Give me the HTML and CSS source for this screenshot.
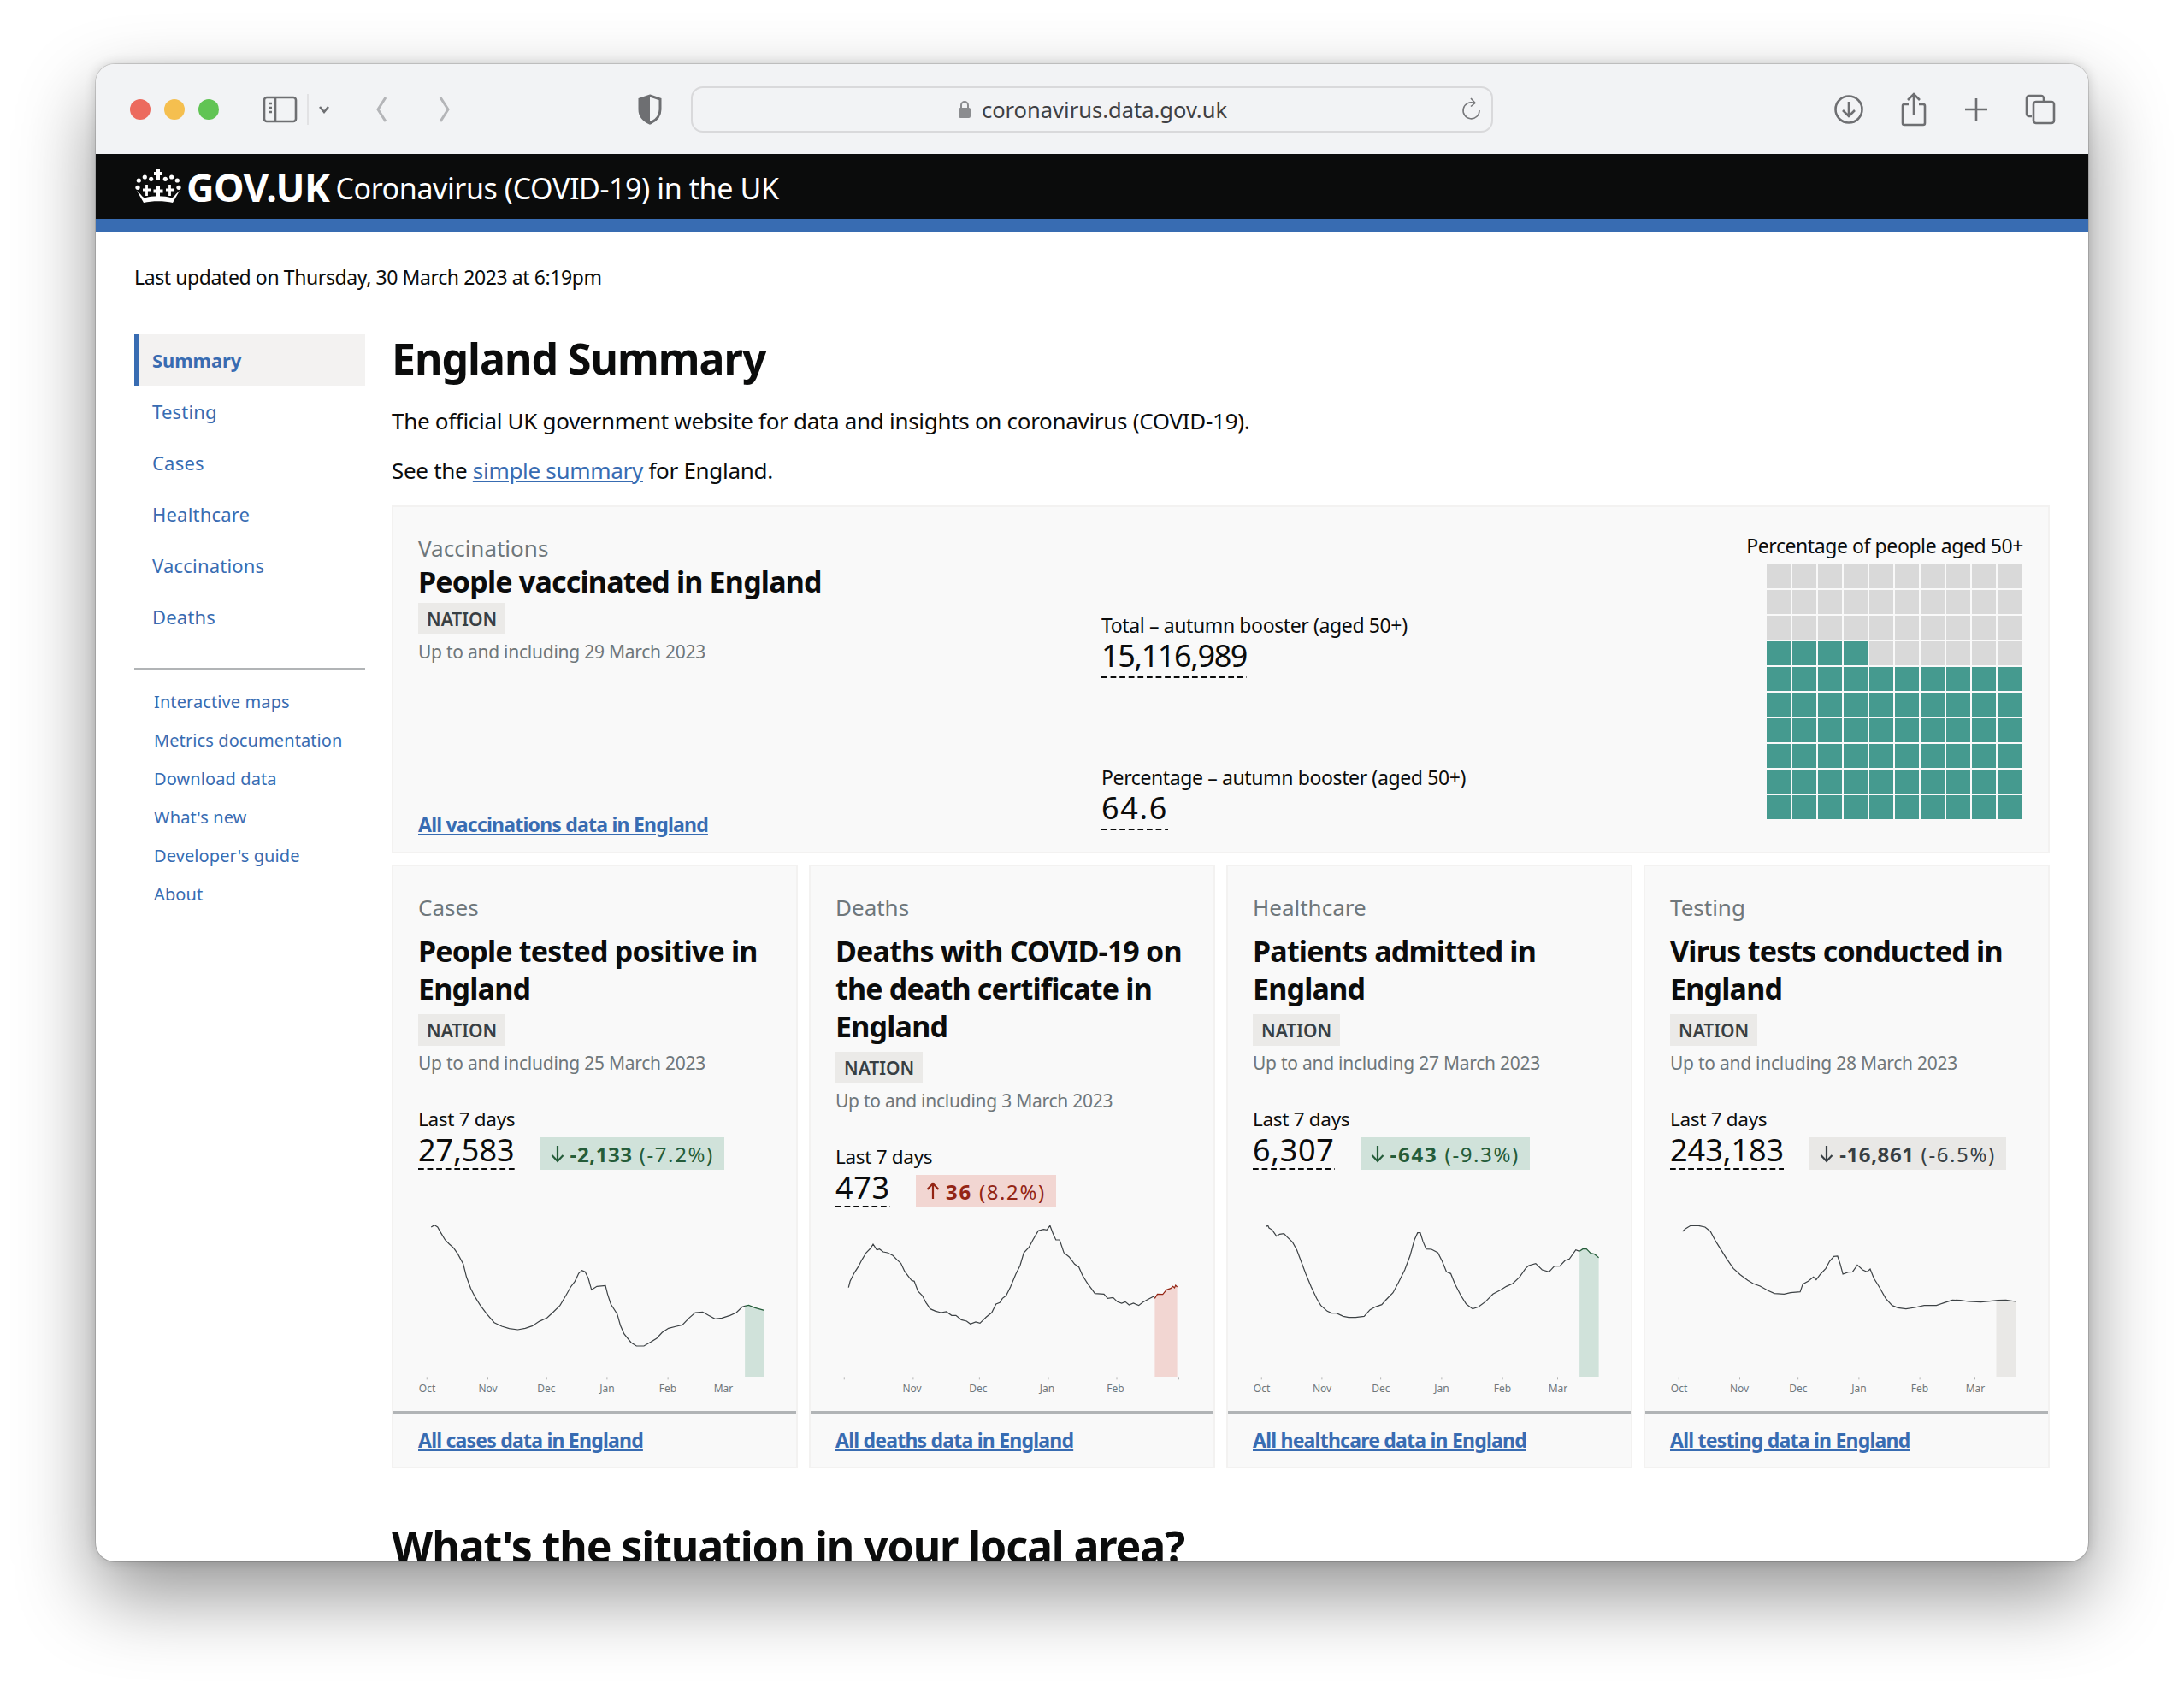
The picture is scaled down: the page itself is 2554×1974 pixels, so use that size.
FILE: index.html
```html
<!DOCTYPE html>
<html lang="en">
<head>
<meta charset="utf-8">
<title>England Summary</title>
<link rel="stylesheet" href="styles.css">
</head>
<body>
<div class="window">
  <div class="chrome">
    <div class="lights"><span class="light red"></span><span class="light amber"></span><span class="light green"></span></div>
    <svg class="ic side" width="100" height="40" viewBox="0 0 100 40"><rect x="4" y="6" width="37" height="28" rx="3" class="st"/><path d="M17 6v28M9 13h4M9 18h4M9 23h4" class="st"/><path d="M55 2v36" stroke="#dcdcde" stroke-width="1.500" fill="none"/><path d="M69 17l5 6 5-6" class="st"/></svg>
    <svg class="ic nav" width="100" height="32" viewBox="0 0 100 32"><path d="M14 2L5 16l9 14M78 2l9 14-9 14" fill="none" stroke="#b4b5b8" stroke-width="3"/></svg>
    <svg class="ic shield" width="30" height="36" viewBox="0 0 30 36"><path d="M15 2l12 4v12c0 8-5 13-12 16C8 31 3 26 3 18V6z" fill="none" stroke="#6e6f72" stroke-width="3"/><path d="M15 2L3 6v12c0 8 5 13 12 16z" fill="#6e6f72"/></svg>
    <div class="address">
      <svg class="lock" width="18" height="22" viewBox="0 0 18 22"><path d="M5 10V6a4 4 0 018 0v4" fill="none" stroke="#8b8c8f" stroke-width="2"/><rect x="2" y="9" width="14" height="12" rx="2" fill="#8b8c8f"/></svg>
      <span class="url">coronavirus.data.gov.uk</span>
      <svg class="reload" width="24" height="28" viewBox="0 0 24 28"><path d="M15 6.500A9.500 9.500 0 1 0 21 15" fill="none" stroke="#77787b" stroke-width="1.600"/><path d="M11 1l5 5.500-5 4" fill="none" stroke="#77787b" stroke-width="1.600"/></svg>
    </div>
    <div class="tools">
      <svg width="36" height="36" viewBox="0 0 36 36"><circle cx="18" cy="18" r="15.500" class="st"/><path d="M18 9v17M11 19l7 7 7-7" class="st"/></svg>
      <svg width="32" height="40" viewBox="0 0 32 40"><path d="M10 14H5a2 2 0 00-2 2v20a2 2 0 002 2h22a2 2 0 002-2V16a2 2 0 00-2-2h-5M16 27V2M9 9l7-7 7 7" class="st"/></svg>
      <svg width="30" height="30" viewBox="0 0 30 30"><path d="M15 2v26M2 15h26" class="st"/></svg>
      <svg width="36" height="36" viewBox="0 0 36 36"><path d="M8 26H5a3 3 0 01-3-3V5a3 3 0 013-3h14a3 3 0 013 3v3" class="st"/><rect x="10" y="9" width="24" height="25" rx="3" class="st"/></svg>
    </div>
  </div>
  <header class="gov">
    <svg class="crown" width="54" height="40" viewBox="0 0 54 40"><g fill="#fff"><circle cx="4.300" cy="13" r="2.600"/><circle cx="11.300" cy="9" r="2.600"/><circle cx="18.700" cy="11.300" r="2.600"/><circle cx="35.300" cy="11.300" r="2.600"/><circle cx="42.700" cy="9" r="2.600"/><circle cx="49.300" cy="13" r="2.600"/><circle cx="3" cy="21.300" r="2.600"/><circle cx="51" cy="21.300" r="2.600"/><path d="M2 25C6 28 8 32 11 33.500 20 30.500 34 30.500 43 33.500 46 32 48 28 52 25L44 39C34 36.500 20 36.500 10 39Z"/></g><path d="M27 0v13M22 5h10M27 20v12M21.500 25.500h11" fill="none" stroke="#fff" stroke-width="4"/><path d="M13.500 18v13M9 24h9M40.500 18v13M36 24h9" fill="none" stroke="#fff" stroke-width="2.800"/></svg>
    <span class="gov-logo">GOV.UK</span>
    <span class="gov-title">Coronavirus (COVID-19) in the UK</span>
  </header>
  <main class="page">
    <p class="updated">Last updated on Thursday, 30 March 2023 at 6:19pm</p>
    <div class="layout">
      <nav class="sidebar">
        <ul class="nav-main">
          <li class="active"><a href="#">Summary</a></li>
          <li><a href="#">Testing</a></li>
          <li><a href="#">Cases</a></li>
          <li><a href="#">Healthcare</a></li>
          <li><a href="#">Vaccinations</a></li>
          <li><a href="#">Deaths</a></li>
        </ul>
        <ul class="nav-sub">
          <li><a href="#">Interactive maps</a></li>
          <li><a href="#">Metrics documentation</a></li>
          <li><a href="#">Download data</a></li>
          <li><a href="#">What's new</a></li>
          <li><a href="#">Developer's guide</a></li>
          <li><a href="#">About</a></li>
        </ul>
      </nav>
      <div class="content">
        <h1>England Summary</h1>
        <p class="intro">The official UK government website for data and insights on coronavirus (COVID-19).</p>
        <p class="intro second">See the <a href="#">simple summary</a> for England.</p>
        <section class="card vacc">
          <div class="vacc-left">
            <div class="kicker">Vaccinations</div>
            <h2 class="vacc-title">People vaccinated in England</h2>
            <span class="chip">NATION</span>
            <div class="date">Up to and including 29 March 2023</div>
            <a class="all" href="#">All vaccinations data in England</a>
          </div>
          <div class="vacc-mid">
            <div class="metric"><div class="m-label">Total – autumn booster (aged 50+)</div><div class="m-value narrow">15,116,989</div></div>
            <div class="metric"><div class="m-label">Percentage – autumn booster (aged 50+)</div><div class="m-value wide">64.6</div></div>
          </div>
          <div class="vacc-right">
            <div class="waffle-cap">Percentage of people aged 50+</div>
            <div class="waffle">
              <i></i><i></i><i></i><i></i><i></i><i></i><i></i><i></i><i></i><i></i>
              <i></i><i></i><i></i><i></i><i></i><i></i><i></i><i></i><i></i><i></i>
              <i></i><i></i><i></i><i></i><i></i><i></i><i></i><i></i><i></i><i></i>
              <b></b><b></b><b></b><b></b><i></i><i></i><i></i><i></i><i></i><i></i>
              <b></b><b></b><b></b><b></b><b></b><b></b><b></b><b></b><b></b><b></b>
              <b></b><b></b><b></b><b></b><b></b><b></b><b></b><b></b><b></b><b></b>
              <b></b><b></b><b></b><b></b><b></b><b></b><b></b><b></b><b></b><b></b>
              <b></b><b></b><b></b><b></b><b></b><b></b><b></b><b></b><b></b><b></b>
              <b></b><b></b><b></b><b></b><b></b><b></b><b></b><b></b><b></b><b></b>
              <b></b><b></b><b></b><b></b><b></b><b></b><b></b><b></b><b></b><b></b>
            </div>
          </div>
        </section>
        <div class="cards">
          <section class="card mini">
            <div class="body">
              <div class="kicker">Cases</div>
              <h2>People tested positive in England</h2>
              <span class="chip">NATION</span>
              <div class="date">Up to and including 25 March 2023</div>
              <div class="last">Last 7 days</div>
              <div class="stat"><span class="value">27,583</span><span class="delta good"><svg class="arrow" width="16" height="22" viewBox="0 0 16 22"><path d="M8 2v18M1.500 13L8 20l6.500-7"/></svg><b class="d-num">-2,133</b><span class="d-pct">(-7.2%)</span></span></div>
            </div>
            <svg class="chart" viewBox="2 0 471 220">
              <svg width="475" height="220" viewBox="12 450 760 660" preserveAspectRatio="none">
                <path class="hl-good" d="M673,772 680,769 692,778 709,787V1020H673Z"/>
                <path class="line" d="M86,495 92,488 98,495 104,515 112,540 120,555 128,568 136,590 146,625 152,670 160,710 168,740 178,770 190,800 204,830 218,843 232,851 248,855 262,850 275,842 288,826 303,813 315,792 327,770 338,735 347,705 355,685 362,657 368,647 374,652 380,675 386,715 396,703 412,700 416,730 422,765 434,800 440,840 447,870 460,900 470,912 484,912 497,898 508,885 518,865 530,850 545,843 556,838 568,815 580,795 594,793 605,805 617,817 630,814 645,805 657,795 668,775 673,772"/>
                <path class="line good" d="M673,772 680,769 692,778 709,787"/>
                <path class="tick" d="M78,1021v9M192,1021v9M302,1021v9M415,1021v9M529,1021v9M632,1021v9"/>
              </svg>
              <g class="ax"><text x="41.500" y="208">Oct</text><text x="112.500" y="208">Nov</text><text x="181" y="208">Dec</text><text x="252" y="208">Jan</text><text x="323" y="208">Feb</text><text x="388" y="208">Mar</text></g>
            </svg>
            <div class="foot"><a class="all" href="#">All cases data in England</a></div>
          </section>
          <section class="card mini">
            <div class="body">
              <div class="kicker">Deaths</div>
              <h2>Deaths with COVID-19 on the death certificate in England</h2>
              <span class="chip">NATION</span>
              <div class="date">Up to and including 3 March 2023</div>
              <div class="last">Last 7 days</div>
              <div class="stat"><span class="value spaced">473</span><span class="delta bad"><svg class="arrow" width="16" height="22" viewBox="0 0 16 22"><path d="M8 20V2M1.500 9L8 2l6.500 7"/></svg><b class="d-num loose">36</b><span class="d-pct">(8.2%)</span></span></div>
            </div>
            <svg class="chart" viewBox="2 0 471 220">
              <svg width="475" height="220" viewBox="793 450 760 660" preserveAspectRatio="none">
                <path class="hl-bad" d="M1440,745 1445,730 1455,731 1462,715 1470,710 1474,703 1477,708 1479,699 1482,705V1020H1440Z"/>
                <path class="line" d="M867,707 870,685 878,655 885,635 892,610 900,585 908,570 913,555 920,575 925,572 932,582 940,585 950,595 958,610 965,622 972,650 980,670 985,682 990,685 997,720 1005,735 1012,760 1020,782 1030,790 1040,795 1050,792 1060,805 1068,805 1078,820 1088,825 1095,835 1105,828 1113,832 1125,810 1135,795 1143,765 1150,760 1155,745 1162,735 1170,705 1180,660 1188,630 1195,585 1205,565 1212,540 1222,508 1232,503 1238,505 1244,490 1250,520 1255,540 1262,540 1270,585 1280,600 1290,625 1298,635 1305,665 1315,695 1322,712 1328,728 1345,730 1352,745 1362,742 1370,757 1378,762 1385,757 1392,768 1400,762 1410,770 1418,758 1428,748 1438,738 1440,745"/>
                <path class="line bad" d="M1440,745 1445,730 1455,731 1462,715 1470,710 1474,703 1477,708 1479,699 1482,705"/>
                <path class="tick" d="M859,1021v9M988,1021v9M1112,1021v9M1241,1021v9M1369,1021v9M1485,1021v9"/>
              </svg>
              <g class="ax"><text x="120.500" y="208">Nov</text><text x="198" y="208">Dec</text><text x="278.500" y="208">Jan</text><text x="358.500" y="208">Feb</text></g>
            </svg>
            <div class="foot"><a class="all" href="#">All deaths data in England</a></div>
          </section>
          <section class="card mini">
            <div class="body">
              <div class="kicker">Healthcare</div>
              <h2>Patients admitted in England</h2>
              <span class="chip">NATION</span>
              <div class="date">Up to and including 27 March 2023</div>
              <div class="last">Last 7 days</div>
              <div class="stat"><span class="value spaced">6,307</span><span class="delta good"><svg class="arrow" width="16" height="22" viewBox="0 0 16 22"><path d="M8 2v18M1.500 13L8 20l6.500-7"/></svg><b class="d-num loose">-643</b><span class="d-pct">(-9.3%)</span></span></div>
            </div>
            <svg class="chart" viewBox="2 0 471 220">
              <svg width="475" height="220" viewBox="6 450 760 660" preserveAspectRatio="none">
                <path class="hl-good" d="M667,580 673,572 680,572 688,587 695,590 703,602V1020H667Z"/>
                <path class="line" d="M80,493 84,490 86,498 92,505 100,527 106,520 114,518 120,530 130,548 138,575 146,615 155,660 165,705 175,745 183,770 195,790 203,797 212,797 225,808 235,812 248,812 264,808 275,785 285,775 297,767 305,750 318,725 328,690 340,645 350,595 358,540 364,515 369,515 374,545 380,572 390,573 402,585 410,615 418,652 426,658 434,695 445,735 455,765 467,782 478,775 492,755 505,730 520,715 530,703 542,693 555,670 566,640 572,630 585,623 597,645 610,652 620,632 630,632 640,612 648,607 660,575 667,580"/>
                <path class="line good" d="M667,580 673,572 680,572 688,587 695,590 703,602"/>
                <path class="tick" d="M72,1021v9M185,1021v9M295,1021v9M409,1021v9M523,1021v9M626,1021v9"/>
              </svg>
              <g class="ax"><text x="41.500" y="208">Oct</text><text x="112" y="208">Nov</text><text x="181" y="208">Dec</text><text x="252" y="208">Jan</text><text x="323" y="208">Feb</text><text x="388" y="208">Mar</text></g>
            </svg>
            <div class="foot"><a class="all" href="#">All healthcare data in England</a></div>
          </section>
          <section class="card mini">
            <div class="body">
              <div class="kicker">Testing</div>
              <h2>Virus tests conducted in England</h2>
              <span class="chip">NATION</span>
              <div class="date">Up to and including 28 March 2023</div>
              <div class="last">Last 7 days</div>
              <div class="stat"><span class="value">243,183</span><span class="delta flat"><svg class="arrow" width="16" height="22" viewBox="0 0 16 22"><path d="M8 2v18M1.500 13L8 20l6.500-7"/></svg><b class="d-num">-16,861</b><span class="d-pct">(-6.5%)</span></span></div>
            </div>
            <svg class="chart" viewBox="2 0 471 220">
              <svg width="475" height="220" viewBox="787 450 760 660" preserveAspectRatio="none">
                <path class="hl-flat" d="M1447,752 1465,751 1483,756V1020H1447Z"/>
                <path class="line" d="M860,510 866,500 875,490 890,490 902,495 912,510 922,545 932,575 942,605 955,640 968,662 982,682 992,693 1005,702 1020,718 1032,728 1050,730 1062,725 1080,722 1085,695 1095,685 1105,670 1110,680 1118,660 1128,640 1135,615 1143,598 1150,597 1155,625 1160,660 1170,653 1178,652 1187,628 1197,645 1205,652 1211,642 1218,675 1228,705 1240,745 1252,770 1263,778 1278,782 1295,777 1312,770 1335,770 1350,760 1365,751 1380,752 1395,756 1418,758 1435,755 1450,752 1465,751 1483,756"/>
                <path class="tick" d="M853,1021v9M967,1021v9M1076,1021v9M1190,1021v9M1304,1021v9M1407,1021v9"/>
              </svg>
              <g class="ax"><text x="41.500" y="208">Oct</text><text x="112" y="208">Nov</text><text x="181" y="208">Dec</text><text x="252" y="208">Jan</text><text x="323" y="208">Feb</text><text x="388" y="208">Mar</text></g>
            </svg>
            <div class="foot"><a class="all" href="#">All testing data in England</a></div>
          </section>
        </div>
        <h2 class="local">What's the situation in your local area?</h2>
      </div>
    </div>
  </main>
</div>
</body>
</html>
```

FILE: styles.css
```css
* { box-sizing: border-box; }
html, body { margin: 0; background: #fff; }
body { padding: 75px 112px 0; height: 1974px; overflow: hidden; font-family: "Noto Sans", "Liberation Sans", sans-serif; color: #0b0c0c; }
a { color: #386cb2; }

.window { width: 2330px; height: 1751px; overflow: hidden; background: #fff; border-radius: 22px; box-shadow: 0 40px 90px rgba(0,0,0,.42), 0 0 14px rgba(0,0,0,.16), 0 0 0 1px rgba(0,0,0,.13); }

.chrome { height: 105px; background: #f2f3f5; display: flex; align-items: center; padding-left: 40px; position: relative; }
.lights { display: flex; gap: 16px; }
.light { width: 24px; height: 24px; border-radius: 50%; }
.red { background: #ec6a5e; }
.amber { background: #f5bf4f; }
.green { background: #61c454; }
.st { fill: none; stroke: #6e6f72; stroke-width: 2.6; }
.ic { flex: none; }
.side { margin-left: 49px; }
.nav { margin-left: 32px; }
.shield { margin-left: 208px; }
.address { margin-left: 33px; width: 938px; height: 54px; border: 2.5px solid #d9d9db; border-radius: 14px; display: flex; align-items: center; justify-content: center; gap: 11px; position: relative; }
.url { font-size: 25.5px; color: #3f4043; letter-spacing: 0; }
.lock { flex: none; }
.reload { position: absolute; right: 11px; top: 11px; }
.tools { margin-left: 398px; display: flex; align-items: center; gap: 42px; }

.gov { height: 91px; background: #0b0c0c; border-bottom: 15px solid #386cb2; display: flex; align-items: center; padding-left: 46px; color: #fff; }
.crown { flex: none; margin-right: 6px; }
.gov-logo { font-weight: 700; font-size: 45px; letter-spacing: -.5px; margin-right: 7px; }
.gov-title { font-size: 34px; letter-spacing: -.4px; padding-top: 3px; }

.page { padding: 35px 45px 0; }
.updated { margin: 0 0 49px; font-size: 23px; line-height: 36px; letter-spacing: -.4px; }
.layout { display: flex; gap: 31px; }
.sidebar { width: 270px; flex: none; }
.sidebar ul { list-style: none; margin: 0; padding: 0; }
.sidebar a { text-decoration: none; }
.nav-main { padding-bottom: 30px !important; border-bottom: 2px solid #b1b4b6; }
.nav-main li { height: 60px; line-height: 60px; padding-left: 21px; font-size: 22px; letter-spacing: .2px; }
.nav-main .active { background: #f3f2f1; border-left: 6px solid #386cb2; padding-left: 15px; font-weight: 700; letter-spacing: -.1px; }
.nav-sub { padding: 15px 0 0 23px !important; }
.nav-sub li { height: 45px; line-height: 45px; font-size: 20px; letter-spacing: .1px; }

.content { flex: 1; min-width: 0; }
h1 { margin: -2px 0 25px; font-size: 50px; line-height: 60px; font-weight: 700; letter-spacing: -1px; }
.intro { margin: 0 0 22px; font-size: 26px; line-height: 36px; letter-spacing: -.3px; }
.second { margin-bottom: 23px; }

.card { background: #f9f9f9; border: 2px solid #f3f2f1; }
.vacc { height: 407px; display: grid; grid-template-columns: 799px 1fr auto; padding: 31px 29px 17px; }
.vacc-left { display: flex; flex-direction: column; align-items: flex-start; padding-top: 2px; }
.kicker { font-size: 26px; line-height: 30px; color: #6f777b; }
.vacc-title { margin: 4px 0 5px; font-size: 34px; line-height: 40px; font-weight: 700; letter-spacing: -.8px; }
.chip { display: inline-block; background: #ebeae8; color: #383f43; font-size: 21px; font-weight: 600; height: 37px; line-height: 39px; padding: 0 10px; }
.date { margin-top: 5px; font-size: 21px; line-height: 30px; color: #6f777b; letter-spacing: -.25px; }
.all { font-size: 23px; font-weight: 700; line-height: 30px; letter-spacing: -.78px; }
.vacc-left .all { margin-top: auto; }
.vacc-mid { padding-top: 92px; display: flex; flex-direction: column; gap: 101px; align-items: flex-start; }
.m-label { font-size: 23px; line-height: 30px; letter-spacing: -.38px; }
.m-value { display: inline-block; font-size: 36px; line-height: 42px; padding-bottom: 5px; background: linear-gradient(to right, #0b0c0c 60%, transparent 0) left bottom / 10.6px 2px repeat-x; }
.narrow { letter-spacing: -1.4px; }
.wide { letter-spacing: 1.6px; }
.waffle-cap { font-size: 23px; line-height: 30px; text-align: right; white-space: nowrap; letter-spacing: -.42px; margin-top: -1px; }
.waffle { margin: 7px 0 0 auto; width: 300px; display: grid; grid-template-columns: repeat(10, 28px); grid-auto-rows: 28px; gap: 2px; }
.waffle i { background: #d9d9d9; }
.waffle b { background: #459a8f; }

.cards { display: grid; grid-template-columns: repeat(4, 1fr); gap: 13px; margin-top: 13px; height: 706px; }
.mini { display: flex; flex-direction: column; min-width: 0; }
.body { padding: 33px 29px 0; display: flex; flex-direction: column; align-items: flex-start; }
.mini h2 { margin: 14px 0 8px; font-size: 34px; line-height: 44px; font-weight: 700; letter-spacing: -.8px; }
.last { margin-top: 36px; font-size: 22.5px; line-height: 30px; letter-spacing: -.3px; }
.mini .date { margin-top: 5px; }
.stat { display: flex; align-items: flex-end; gap: 30px; }
.value { font-size: 36px; line-height: 41px; padding-bottom: 3px; background: linear-gradient(to right, #0b0c0c 60%, transparent 0) left bottom / 10.6px 2px repeat-x; }
.spaced { letter-spacing: .7px; }
.delta { display: flex; align-items: center; gap: 8px; height: 38px; padding: 0 12px; font-size: 24px; white-space: nowrap; }
.arrow { flex: none; }
.arrow path { fill: none; stroke: currentColor; stroke-width: 2.2; }
.d-num { font-weight: 700; letter-spacing: .6px; margin-left: -1px; }
.d-num.loose { letter-spacing: 1.8px; }
.d-pct { letter-spacing: 1.6px; }
.good { background: #d0e2da; color: #245c39; }
.bad { background: #f2d6d2; color: #942514; }
.flat { background: #e9e8e6; color: #383f43; }

.chart { display: block; width: 471px; height: 220px; margin-top: auto; margin-bottom: 10px; flex: none; }
.line { fill: none; stroke: #3d4245; stroke-width: 1.2; vector-effect: non-scaling-stroke; }
.line.good { stroke: #245c39; background: none; }
.line.bad { stroke: #942514; background: none; }
.hl-good { fill: #d0e2da; }
.hl-bad { fill: #f2d6d2; }
.hl-flat { fill: #e9e8e6; }
.tick { fill: none; stroke: #b4b4b4; stroke-width: 1; vector-effect: non-scaling-stroke; }
.ax text { font-family: "Noto Sans", sans-serif; font-size: 12px; fill: #6f777b; text-anchor: middle; }

.foot { border-top: 3px solid #b1b4b6; padding: 16px 29px 0; height: 65px; }
.local { margin: 61px 0 0; font-size: 50px; line-height: 60px; font-weight: 700; letter-spacing: -1.1px; white-space: nowrap; }
```
